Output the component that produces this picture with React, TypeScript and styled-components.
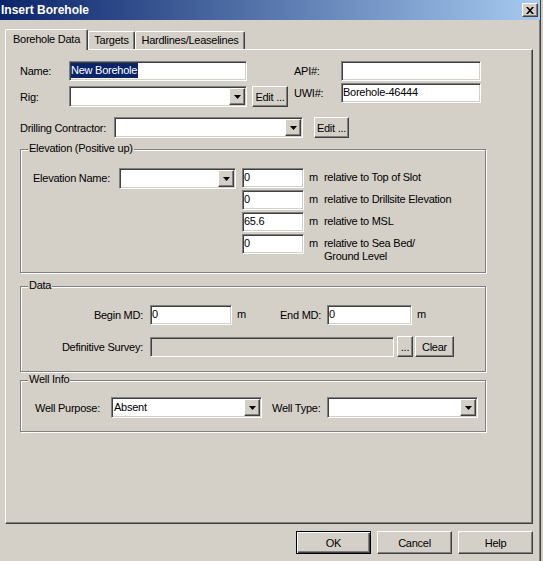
import React from "react";
import styled, { createGlobalStyle, css } from "styled-components";

const GlobalStyle = createGlobalStyle`
  html, body {
    margin: 0;
    padding: 0;
    background: #d4d0c8;
  }
  body {
    font-family: "Liberation Sans", Arial, sans-serif;
    font-size: 11px;
    letter-spacing: -0.25px;
    color: #000;
  }
  * { box-sizing: border-box; }
`;

const sunken = css`
  border: 1px solid;
  border-color: #808080 #fff #fff #808080;
  box-shadow: inset 1px 1px #404040, inset -1px -1px #d4d0c8;
`;

const raised = css`
  border: 1px solid;
  border-color: #fff #404040 #404040 #fff;
  box-shadow: inset -1px -1px #808080;
  background: #d4d0c8;
`;

const Window = styled.div`
  width: 541px;
  height: 561px;
  background: #d4d0c8;
  border-right: 1px solid #404040;
  box-shadow: inset -1px 0 #808080;
  display: flex;
  flex-direction: column;
`;

const TitleBar = styled.div`
  flex: none;
  height: 20px;
  display: flex;
  align-items: center;
  justify-content: space-between;
  padding: 0 2px 0 1px;
  background: linear-gradient(to right, #0a246a, #a6caf0);
  color: #fff;
  font-weight: bold;
  font-size: 12px;
  letter-spacing: 0;
`;

const CloseBtn = styled.div`
  ${raised};
  width: 16px;
  height: 14px;
  display: flex;
  align-items: center;
  justify-content: center;
`;

const Body = styled.div`
  flex: 1;
  display: flex;
  flex-direction: column;
  padding: 9px 7px 0 5px;
`;

const TabStrip = styled.div`
  position: relative;
  z-index: 1;
  height: 20px;
  display: flex;
  align-items: flex-start;
`;

const Tab = styled.div<{ $w: number; $active?: boolean }>`
  width: ${(p) => p.$w}px;
  height: ${(p) => (p.$active ? 21 : 18)}px;
  margin-top: ${(p) => (p.$active ? 0 : 2)}px;
  line-height: ${(p) => (p.$active ? 18 : 17)}px;
  text-align: center;
  background: #d4d0c8;
  border-left: 1px solid #fff;
  border-top: 1px solid #fff;
  border-right: 1px solid #404040;
  border-radius: 2px 2px 0 0;
  box-shadow: inset -1px 0 #808080;
  white-space: nowrap;
`;

const Panel = styled.div`
  width: 528px;
  height: 475px;
  border-top: 1px solid #fff;
  border-left: 1px solid #fff;
  border-right: 1px solid #404040;
  border-bottom: 1px solid #404040;
  box-shadow: inset -1px -1px #808080;
  padding: 11px 0 0 14px;
  display: flex;
  flex-direction: column;
`;

const TopGrid = styled.div`
  display: flex;
  gap: 6px;
`;

const Col = styled.div<{ $gap: number }>`
  display: flex;
  flex-direction: column;
  gap: ${(p) => p.$gap}px;
`;

const Row = styled.div<{ $mt?: number }>`
  display: flex;
  align-items: center;
  margin-top: ${(p) => p.$mt ?? 0}px;
`;

const Label = styled.span<{ $w?: number; $right?: boolean; $mr?: number; $ml?: number }>`
  flex: none;
  width: ${(p) => (p.$w ? `${p.$w}px` : "auto")};
  text-align: ${(p) => (p.$right ? "right" : "left")};
  margin-right: ${(p) => p.$mr ?? 0}px;
  margin-left: ${(p) => p.$ml ?? 0}px;
  white-space: nowrap;
`;

const TextField = styled.div<{ $w: number; $disabled?: boolean }>`
  ${sunken};
  flex: none;
  width: ${(p) => p.$w}px;
  height: 20px;
  padding: 0 1px;
  line-height: 16px;
  background: ${(p) => (p.$disabled ? "#d4d0c8" : "#fff")};
  white-space: nowrap;
  overflow: hidden;
`;

const Selected = styled.span`
  display: inline-block;
  line-height: 15px;
  margin-top: 0;
  background: #0a246a;
  color: #fff;
  padding-right: 1px;
`;

const ComboBox = styled.div<{ $w: number }>`
  ${sunken};
  flex: none;
  width: ${(p) => p.$w}px;
  height: 21px;
  padding: 1px;
  display: flex;
  background: #fff;
`;

const ComboText = styled.div`
  flex: 1;
  padding-left: 1px;
  line-height: 17px;
  white-space: nowrap;
  overflow: hidden;
`;

const DropBtn = styled.div`
  ${raised};
  width: 16px;
  height: 17px;
  display: flex;
  align-items: center;
  justify-content: center;
`;

const Button = styled.button<{ $w: number; $h?: number; $ml?: number; $default?: boolean }>`
  ${raised};
  flex: none;
  width: ${(p) => p.$w}px;
  height: ${(p) => p.$h ?? 21}px;
  margin-left: ${(p) => p.$ml ?? 0}px;
  padding: 0;
  font: inherit;
  letter-spacing: inherit;
  color: #000;
  white-space: nowrap;
  ${(p) =>
    p.$default &&
    css`
      border: 1px solid #000;
      box-shadow: inset 1px 1px #fff, inset -1px -1px #404040, inset -2px -2px #808080;
    `}
`;

const Group = styled.div<{ $h: number; $mt: number }>`
  position: relative;
  width: 466px;
  height: ${(p) => p.$h}px;
  margin-top: ${(p) => p.$mt}px;
  border: 1px solid #808080;
  box-shadow: inset 1px 1px #fff, 1px 1px #fff;
`;

const Legend = styled.span`
  position: absolute;
  top: -8px;
  left: 7px;
  padding: 0 1px;
  line-height: 13px;
  background: #d4d0c8;
  white-space: nowrap;
`;

const ElevBody = styled.div`
  display: flex;
  align-items: flex-start;
  padding: 18px 0 0 12px;
`;

const ElevLabel = styled.span`
  width: 86px;
  line-height: 21px;
  white-space: nowrap;
`;

const ElevStack = styled.div`
  display: flex;
  flex-direction: column;
  gap: 2px;
  margin-left: 6px;
`;

const ElevRow = styled.div`
  display: flex;
  align-items: flex-start;
`;

const Unit = styled.span<{ $w?: number }>`
  flex: none;
  width: ${(p) => (p.$w ? `${p.$w}px` : "auto")};
  padding-left: 5px;
  line-height: 13px;
  padding-top: 3px;
  align-self: flex-start;
`;

const RelText = styled.span`
  margin-left: 6px;
  padding-top: 3px;
  line-height: 13px;
  white-space: nowrap;
`;

const DataBody = styled.div`
  display: flex;
  flex-direction: column;
  gap: 11px;
  padding-top: 18px;
`;

const WellBody = styled.div`
  display: flex;
  align-items: center;
  padding: 16px 0 0 14px;
`;

const Footer = styled.div`
  display: flex;
  justify-content: flex-end;
  gap: 6px;
  padding-top: 7px;
`;

const Arrow = () => (
  <svg width="7" height="4" viewBox="0 0 7 4">
    <polygon points="0,0 7,0 3.5,4" fill="#000" />
  </svg>
);

const Combo: React.FC<{ w: number; value?: string }> = ({ w, value }) => (
  <ComboBox $w={w}>
    <ComboText>{value}</ComboText>
    <DropBtn>
      <Arrow />
    </DropBtn>
  </ComboBox>
);

const elevations = [
  { v: "0", t: "relative to Top of Slot" },
  { v: "0", t: "relative to Drillsite Elevation" },
  { v: "65.6", t: "relative to MSL" },
  { v: "0", t: "relative to Sea Bed/", t2: "Ground Level" },
];

export default function App() {
  return (
    <>
      <GlobalStyle />
      <Window>
        <TitleBar>
          <span>Insert Borehole</span>
          <CloseBtn>
            <svg width="8" height="7" viewBox="0 0 8 7">
              <path d="M0 0H2L4 2.3L6 0H8L5 3.5L8 7H6L4 4.7L2 7H0L3 3.5Z" fill="#000" />
            </svg>
          </CloseBtn>
        </TitleBar>
        <Body>
          <TabStrip>
            <Tab $w={83} $active>Borehole Data</Tab>
            <Tab $w={47}>Targets</Tab>
            <Tab $w={110}>Hardlines/Leaselines</Tab>
          </TabStrip>
          <Panel>
            <TopGrid>
              <Col $gap={5}>
                <Row>
                  <Label $w={49}>Name:</Label>
                  <TextField $w={178}>
                    <Selected>New Borehole</Selected>
                  </TextField>
                </Row>
                <Row>
                  <Label $w={49}>Rig:</Label>
                  <Combo w={178} />
                  <Button $w={36} $ml={5}>Edit ...</Button>
                </Row>
              </Col>
              <Col $gap={2}>
                <Row>
                  <Label $w={47}>API#:</Label>
                  <TextField $w={140} />
                </Row>
                <Row>
                  <Label $w={47}>UWI#:</Label>
                  <TextField $w={140}>Borehole-46444</TextField>
                </Row>
              </Col>
            </TopGrid>
            <Row $mt={10}>
              <Label $w={94}>Drilling Contractor:</Label>
              <Combo w={189} />
              <Button $w={35} $ml={11}>Edit ...</Button>
            </Row>

            <Group $h={124} $mt={11}>
              <Legend>Elevation (Positive up)</Legend>
              <ElevBody>
                <ElevLabel>Elevation Name:</ElevLabel>
                <Combo w={117} />
                <ElevStack>
                  {elevations.map((e, i) => (
                    <ElevRow key={i}>
                      <TextField $w={62}>{e.v}</TextField>
                      <Unit>m</Unit>
                      <RelText>
                        {e.t}
                        {e.t2 && (
                          <>
                            <br />
                            {e.t2}
                          </>
                        )}
                      </RelText>
                    </ElevRow>
                  ))}
                </ElevStack>
              </ElevBody>
            </Group>

            <Group $h={86} $mt={13}>
              <Legend>Data</Legend>
              <DataBody>
                <Row>
                  <Label $w={122} $right $mr={7}>Begin MD:</Label>
                  <TextField $w={82}>0</TextField>
                  <Unit $w={48}>m</Unit>
                  <Label $w={40} $right $mr={7}>End MD:</Label>
                  <TextField $w={85}>0</TextField>
                  <Unit>m</Unit>
                </Row>
                <Row>
                  <Label $w={122} $right $mr={7}>Definitive Survey:</Label>
                  <TextField $w={244} $disabled />
                  <Button $w={16} $ml={3}>...</Button>
                  <Button $w={39} $ml={2}>Clear</Button>
                </Row>
              </DataBody>
            </Group>

            <Group $h={52} $mt={8}>
              <Legend>Well Info</Legend>
              <WellBody>
                <Label $w={76}>Well Purpose:</Label>
                <Combo w={151} value="Absent" />
                <Label $w={55} $ml={10}>Well Type:</Label>
                <Combo w={151} />
              </WellBody>
            </Group>
          </Panel>
          <Footer>
            <Button $w={75} $h={23} $default>OK</Button>
            <Button $w={75} $h={23}>Cancel</Button>
            <Button $w={75} $h={23}>Help</Button>
          </Footer>
        </Body>
      </Window>
    </>
  );
}
